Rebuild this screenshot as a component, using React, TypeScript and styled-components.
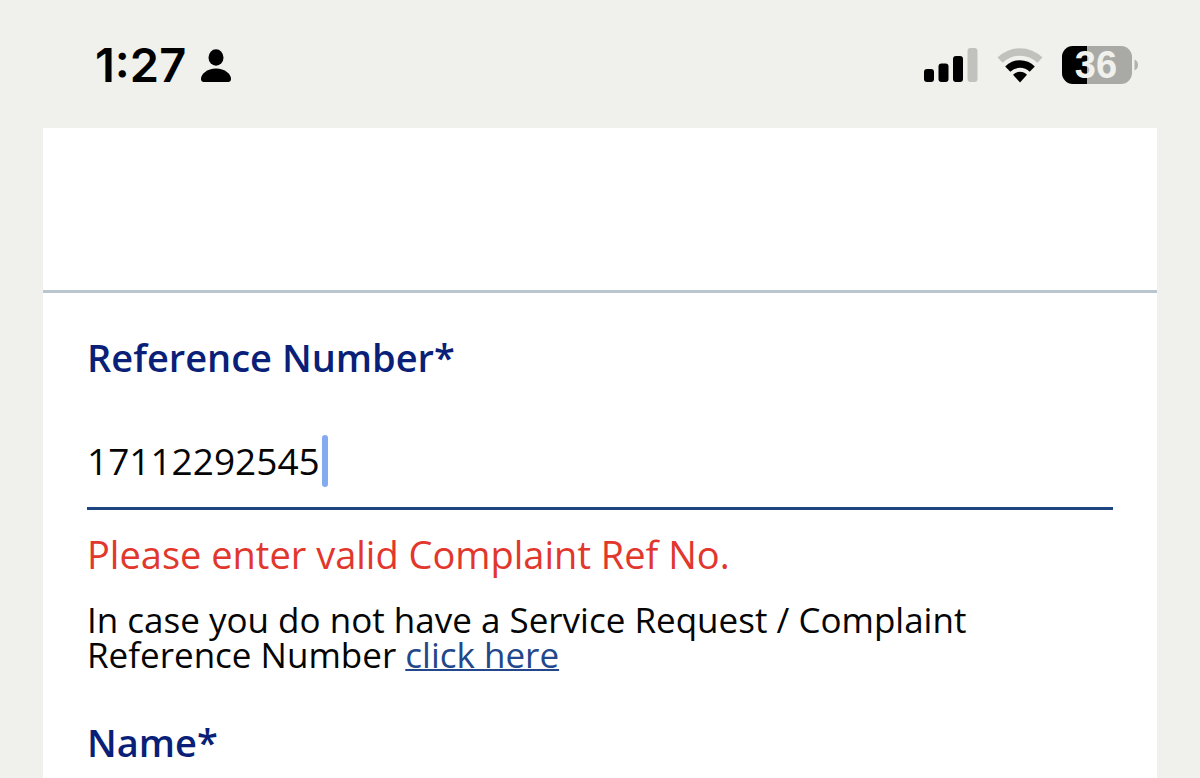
import React, { useState } from "react";
import styled, { createGlobalStyle } from "styled-components";

const GlobalStyle = createGlobalStyle`
  * { box-sizing: border-box; }
  body {
    margin: 0;
    background: #f0f1ec;
    font-family: "Open Sans", "Noto Sans", sans-serif;
    color: #050505;
  }
`;

const Screen = styled.div`
  display: flex;
  flex-direction: column;
  height: 100vh;
  overflow: hidden;
`;

const StatusBar = styled.header`
  display: flex;
  align-items: center;
  justify-content: space-between;
  padding: 35px 62px 33px 95px;
  color: #000;
`;

const StatusGroup = styled.div<{ $gap: number }>`
  display: flex;
  align-items: center;
  gap: ${(p) => p.$gap}px;
`;

const Clock = styled.time`
  font: 600 47px/60px Inter, "Liberation Sans", sans-serif;
`;

const BatteryText = styled.text`
  font: 700 38px "Liberation Sans", Arial, sans-serif;
`;

const Sheet = styled.main`
  flex: 1;
  margin: 0 43px;
  background: #fff;
`;

const Banner = styled.div`
  height: 165px;
  border-bottom: 3px solid #b9c5cf;
`;

const Form = styled.form`
  display: flex;
  flex-direction: column;
  padding: 38px 44px 0;
`;

const Label = styled.label`
  font-size: 38px;
  font-weight: 600;
  line-height: 52px;
  color: #0a1f78;
`;

const Field = styled.div`
  display: flex;
  align-items: center;
  margin-top: 52px;
  padding-bottom: 20px;
  border-bottom: 3px solid #1d4680;
`;

const TextInput = styled.input`
  field-sizing: content;
  height: 52px;
  padding: 0;
  border: 0;
  outline: 0;
  background: transparent;
  color: inherit;
  caret-color: transparent;
  font: 400 37px/52px "Open Sans", "Noto Sans", sans-serif;
`;

const Caret = styled.span`
  width: 6px;
  height: 52px;
  margin-left: 2px;
  border-radius: 3px;
  background: #84aaf0;
`;

const ErrorText = styled.p`
  margin: 18px 0 0;
  font-size: 38px;
  line-height: 52px;
  color: #e1372d;
`;

const Hint = styled.p`
  margin: 22px 0 44px;
  font-size: 35px;
  line-height: 35px;
`;

const HintLink = styled.a`
  color: #23478a;
  text-decoration-thickness: 2px;
`;

const PersonIcon = () => (
  <svg width="32" height="36" viewBox="0 0 32 36" aria-hidden="true">
    <ellipse cx="16" cy="10.500" rx="7.500" ry="8.300" />
    <path d="M16 21.500C25 21.500 31 27 31 32C31 34 30 35 28 35H4C2 35 1 34 1 32C1 27 7 21.500 16 21.500Z" />
  </svg>
);

const SignalIcon = () => (
  <svg width="54" height="34" viewBox="0 0 54 34" aria-hidden="true">
    <rect x="0" y="21" width="10" height="13" rx="3" />
    <rect x="14.500" y="15.500" width="10" height="18.500" rx="3" />
    <rect x="29" y="8" width="10" height="26" rx="3" />
    <rect x="43.500" y="0" width="10" height="34" rx="3" fill="#c1c1bd" />
  </svg>
);

const WifiIcon = () => (
  <svg width="48" height="36" viewBox="0 0 48 36" aria-hidden="true">
    <path d="M1.500 10.500A32 32 0 0 1 46.500 10.500L41.300 15.800A24.500 24.500 0 0 0 6.700 15.800Z" fill="#c1c1bd" />
    <path d="M9.200 19.500A20.500 20.500 0 0 1 38.800 19.500L33.700 24.800A13.800 13.800 0 0 0 14.300 24.800Z" />
    <path d="M17 27.800A9.500 9.500 0 0 1 31 27.800L24 35.500Z" />
  </svg>
);

const BatteryIcon = () => (
  <svg width="76" height="38" viewBox="0 0 76 38" role="img" aria-label="Battery">
    <defs>
      <clipPath id="battery-shell">
        <rect width="70" height="38" rx="11" />
      </clipPath>
    </defs>
    <g clipPath="url(#battery-shell)">
      <rect width="70" height="38" fill="#a9aaa6" />
      <rect width="25" height="38" />
    </g>
    <path d="M72.500 13.500C75 14.500 76 16.500 76 19S75 23.500 72.500 24.500Z" fill="#b2b3af" />
    <BatteryText x="34" y="32" textAnchor="middle" fill="#f0f1ec">36</BatteryText>
  </svg>
);

export default function App() {
  const [reference, setReference] = useState("17112292545");

  return (
    <Screen>
      <GlobalStyle />
      <StatusBar>
        <StatusGroup $gap={14}>
          <Clock>1:27</Clock>
          <PersonIcon />
        </StatusGroup>
        <StatusGroup $gap={18}>
          <SignalIcon />
          <WifiIcon />
          <BatteryIcon />
        </StatusGroup>
      </StatusBar>
      <Sheet>
        <Banner />
        <Form>
          <Label htmlFor="reference">Reference Number*</Label>
          <Field>
            <TextInput
              id="reference"
              inputMode="numeric"
              aria-invalid="true"
              aria-describedby="reference-error"
              value={reference}
              onChange={(e) => setReference(e.target.value)}
            />
            <Caret />
          </Field>
          <ErrorText id="reference-error">Please enter valid Complaint Ref No.</ErrorText>
          <Hint>
            In case you do not have a Service Request / Complaint Reference Number{" "}
            <HintLink href="#no-reference">click here</HintLink>
          </Hint>
          <Label htmlFor="name">Name*</Label>
          <Field>
            <TextInput id="name" />
          </Field>
        </Form>
      </Sheet>
    </Screen>
  );
}
